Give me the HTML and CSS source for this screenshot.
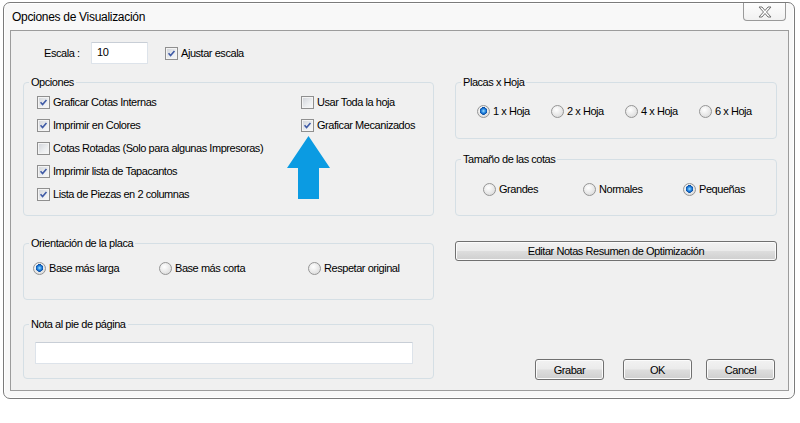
FILE: index.html
```html
<!DOCTYPE html>
<html lang="es">
<head>
<meta charset="utf-8">
<title>Opciones de Visualización</title>
<link rel="stylesheet" href="styles.css">
</head>
<body>
<div class="window">
  <div class="titlebar">
    <span class="title">Opciones de Visualización</span>
    <button class="close" aria-label="Cerrar">
      <svg width="14" height="12" viewBox="0 0 14 12"><polygon points="1,1 4,1 7,4.5 10,1 13,1 8.5,6 13,11 10,11 7,7.5 4,11 1,11 5.5,6" fill="#fff" stroke="#727272" stroke-width="1" stroke-linejoin="round"/></svg>
    </button>
  </div>
  <div class="client">
    <div class="scale-row">
      <span class="scale-label">Escala :</span>
      <div class="textbox scale-input">10</div>
      <label class="check"><span class="cb"><svg viewBox="0 0 13 13"><path d="M3 6.2 L5.4 8.8 L10 3.6" fill="none" stroke="#3f5aa6" stroke-width="1.9"/></svg></span>Ajustar escala</label>
    </div>
    <div class="columns">
      <div class="col col-left">
        <fieldset class="group g-opciones">
          <legend>Opciones</legend>
          <div class="opts">
            <div class="opt-col opt-col-1">
              <label class="check"><span class="cb"><svg viewBox="0 0 13 13"><path d="M3 6.2 L5.4 8.8 L10 3.6" fill="none" stroke="#3f5aa6" stroke-width="1.9"/></svg></span>Graficar Cotas Internas</label>
              <label class="check"><span class="cb"><svg viewBox="0 0 13 13"><path d="M3 6.2 L5.4 8.8 L10 3.6" fill="none" stroke="#3f5aa6" stroke-width="1.9"/></svg></span>Imprimir en Colores</label>
              <label class="check"><span class="cb"></span>Cotas Rotadas (Solo para algunas Impresoras)</label>
              <label class="check"><span class="cb"><svg viewBox="0 0 13 13"><path d="M3 6.2 L5.4 8.8 L10 3.6" fill="none" stroke="#3f5aa6" stroke-width="1.9"/></svg></span>Imprimir lista de Tapacantos</label>
              <label class="check"><span class="cb"><svg viewBox="0 0 13 13"><path d="M3 6.2 L5.4 8.8 L10 3.6" fill="none" stroke="#3f5aa6" stroke-width="1.9"/></svg></span>Lista de Piezas en 2 columnas</label>
            </div>
            <div class="opt-col opt-col-2">
              <label class="check"><span class="cb"></span>Usar Toda la hoja</label>
              <label class="check"><span class="cb"><svg viewBox="0 0 13 13"><path d="M3 6.2 L5.4 8.8 L10 3.6" fill="none" stroke="#3f5aa6" stroke-width="1.9"/></svg></span>Graficar Mecanizados</label>
              <svg class="arrow" width="43" height="63" viewBox="0 0 43 63"><polygon points="21.5,0 43,32 32,32 32,63 11,63 11,32 0,32" fill="#0b9be2"/></svg>
            </div>
          </div>
        </fieldset>
        <fieldset class="group g-orient">
          <legend>Orientación de la placa</legend>
          <div class="radios">
            <label class="radio r-o1"><span class="rb on"></span>Base más larga</label>
            <label class="radio r-o2"><span class="rb"></span>Base más corta</label>
            <label class="radio"><span class="rb"></span>Respetar original</label>
          </div>
        </fieldset>
        <fieldset class="group g-nota">
          <legend>Nota al pie de página</legend>
          <div class="textbox nota-input"></div>
        </fieldset>
      </div>
      <div class="col col-right">
        <fieldset class="group g-placas">
          <legend>Placas x Hoja</legend>
          <div class="radios">
            <label class="radio r-p"><span class="rb on"></span>1 x Hoja</label>
            <label class="radio r-p"><span class="rb"></span>2 x Hoja</label>
            <label class="radio r-p"><span class="rb"></span>4 x Hoja</label>
            <label class="radio"><span class="rb"></span>6 x Hoja</label>
          </div>
        </fieldset>
        <fieldset class="group g-cotas">
          <legend>Tamaño de las cotas</legend>
          <div class="radios">
            <label class="radio r-c"><span class="rb"></span>Grandes</label>
            <label class="radio r-c"><span class="rb"></span>Normales</label>
            <label class="radio"><span class="rb on"></span>Pequeñas</label>
          </div>
        </fieldset>
        <button class="btn btn-wide">Editar Notas Resumen de Optimización</button>
        <div class="actions">
          <button class="btn btn-grabar">Grabar</button>
          <button class="btn btn-ok">OK</button>
          <button class="btn">Cancel</button>
        </div>
      </div>
    </div>
  </div>
</div>
</body>
</html>
```

FILE: styles.css
```css
* { box-sizing: border-box; }
html, body { margin: 0; padding: 0; background: #fff; }
body {
  width: 800px; height: 423px; overflow: hidden;
  font-family: "Liberation Sans", Arial, sans-serif;
  font-size: 11px; letter-spacing: -0.45px; color: #000;
}
.window {
  margin: 2px 0 0 3px;
  width: 792px; height: 397px;
  border: 1px solid #7b7b7b;
  border-radius: 7px;
  background: #f8f8f8;
  box-shadow: inset 0 0 0 1px #ffffff;
  display: flex; flex-direction: column;
}
.titlebar {
  height: 27px; flex: none;
  display: flex; justify-content: space-between; align-items: flex-start;
  padding: 0 8px 0 8px;
}
.title { font-size: 12px; letter-spacing: -0.3px; line-height: 12px; margin-top: 8px; }
.close {
  width: 43px; height: 18px; padding: 0; margin: 0;
  border: 1px solid #9a9a9a; border-top: none;
  border-radius: 0 0 4px 4px;
  background: linear-gradient(#fdfdfd, #f1f1f1);
  display: flex; align-items: center; justify-content: center;
}
.close svg { display: block; }
.client {
  flex: 1; margin: 0 5px 7px 6px;
  border: 1px solid #9c9c9c;
  background: #f0f0f0;
  display: flex; flex-direction: column;
}
.scale-row {
  display: flex; align-items: center;
  margin: 11px 0 0 33px; height: 22px;
}
.scale-label { width: 47px; }
.textbox {
  background: #fff;
  border: 1px solid #dde3ea; border-top-color: #c8ced6;
  border-radius: 1px;
}
.scale-input { width: 57px; height: 22px; padding: 3px 0 0 5px; line-height: 13px; }
.scale-row .check { margin-left: 17px; }
.check, .radio {
  display: flex; align-items: center; height: 13px; line-height: 13px; white-space: nowrap;
}
.cb {
  width: 13px; height: 13px; flex: none; margin-right: 3px;
  border: 1px solid #8f8f8f;
  background: linear-gradient(135deg, #cfd2d8 0%, #eceef0 60%, #f8f8f8 100%);
  box-shadow: inset 0 0 0 1px #f4f4f4;
}
.cb svg { display: block; width: 11px; height: 11px; margin: 0; }
.rb {
  width: 13px; height: 13px; flex: none; margin-right: 3px;
  border: 1px solid #959595; border-radius: 50%;
  background: radial-gradient(circle at 40% 35%, #ffffff 0, #f0f0f0 35%, #d4d4d4 100%);
}
.rb.on {
  background:
    radial-gradient(circle at 50% 45%, #a8deff 0, #3b9be8 1.6px, #1567c8 2.8px, #0b4f9e 3.6px, rgba(11,79,158,0) 4px),
    radial-gradient(circle at 40% 35%, #ffffff 0, #f0f0f0 35%, #d4d4d4 100%);
}
.columns {
  flex: 1; display: flex; gap: 21px;
  padding: 12px 11px 10px 12px;
}
.col { display: flex; flex-direction: column; }
.col-left { width: 411px; }
.col-right { width: 322px; }
.group {
  margin: 0; padding: 0; min-width: 0;
  border: 1px solid #d5dfe5; border-radius: 4px;
}
.group legend { margin-left: 5px; padding: 0 2px; line-height: 13px; }
.g-opciones { height: 140px; padding-top: 7px; }
.opts { display: flex; margin-left: 13px; }
.opt-col { display: flex; flex-direction: column; gap: 10px; }
.opt-col-1 { width: 264px; }
.arrow { display: block; margin: -6px 0 0 -14px; }
.g-orient { height: 63px; margin-top: 21px; padding-top: 12px; }
.g-orient .radios { margin-left: 9px; }
.g-nota { height: 61px; margin-top: 18px; padding-top: 11px; }
.nota-input { width: 378px; height: 22px; margin-left: 11px; }
.radios { display: flex; }
.r-o1 { width: 126px; }
.r-o2 { width: 149px; }
.g-placas { height: 63px; padding-top: 16px; }
.g-placas .radios { margin-left: 21px; }
.r-p { width: 74px; }
.g-cotas { height: 63px; margin-top: 14px; padding-top: 17px; }
.g-cotas .radios { margin-left: 27px; }
.r-c { width: 100px; }
.btn {
  font-family: "Liberation Sans", Arial, sans-serif; font-size: 11px; letter-spacing: -0.45px; color: #000;
  height: 21px; padding: 0;
  border: 1px solid #707070; border-radius: 3px;
  background: linear-gradient(#f2f2f2 0%, #ebebeb 48%, #dddddd 52%, #cfcfcf 100%);
  box-shadow: inset 0 0 0 1px #fbfbfb;
}
.btn-wide { width: 322px; height: 20px; margin-top: 25px; }
.actions {
  margin-top: auto; display: flex; justify-content: flex-end; padding-right: 2px;
}
.actions .btn { width: 69px; }
.btn-grabar { margin-right: 19px; }
.btn-ok { margin-right: 14px; }
```
